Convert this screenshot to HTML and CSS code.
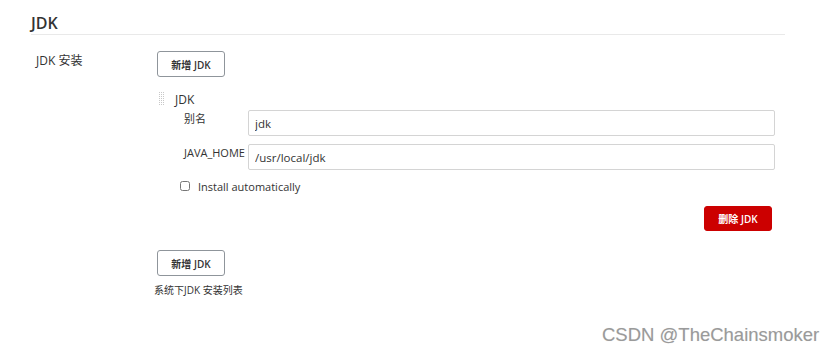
FILE: index.html
```html
<!DOCTYPE html>
<html lang="zh">
<head>
  <meta charset="UTF-8">
  <meta name="viewport" content="width=device-width, initial-scale=1.0">
  <title>JDK</title>
  <link rel="stylesheet" href="styles.css">
</head>
<body>
  <main class="page">
    <h2 class="section-title">JDK</h2>

    <div class="setting">
      <div class="setting-label">JDK 安装</div>
      <div class="setting-body">
        <button type="button" class="btn">新增 JDK</button>

        <div class="repeated">
          <div class="repeated-head">
            <svg class="handle" width="6" height="14" viewBox="0 0 6 14">
              <defs>
                <pattern id="dots" width="2" height="2" patternUnits="userSpaceOnUse">
                  <rect width="1" height="1" fill="#c8c8c8"/>
                </pattern>
              </defs>
              <rect width="6" height="14" fill="url(#dots)"/>
            </svg>
            <span class="repeated-title">JDK</span>
          </div>

          <div class="field">
            <label class="field-label" for="name">别名</label>
            <input class="field-input" id="name" type="text" value="jdk">
          </div>
          <div class="field">
            <label class="field-label" for="home">JAVA_HOME</label>
            <input class="field-input" id="home" type="text" value="/usr/local/jdk">
          </div>

          <label class="check">
            <input type="checkbox" class="check-box">
            <span>Install automatically</span>
          </label>

          <div class="repeated-actions">
            <button type="button" class="btn danger">删除 JDK</button>
          </div>
        </div>

        <button type="button" class="btn">新增 JDK</button>
        <div class="hint">系统下JDK 安装列表</div>
      </div>
    </div>
  </main>

  <div class="watermark">CSDN @TheChainsmoker</div>
</body>
</html>
```

FILE: styles.css
```css
:root {
  --text: #333;
  --line: #e9e9e9;
  --field-border: #d4d4d4;
  --danger: #cc0000;
}

* {
  box-sizing: border-box;
  font-family: 'Open Sans', 'Noto Sans CJK SC', sans-serif;
}

body {
  margin: 0;
  background-color: white;
  color: var(--text);
}

.page {
  width: 785px;
  padding-left: 31px;
}

.section-title {
  margin: 12px 0 0;
  font-size: 16px;
  line-height: 22px;
  font-weight: 600;
  border-bottom: 1px solid var(--line);
}

.setting {
  display: flex;
  margin-top: 16px;
}

.setting-label {
  width: 126px;
  padding-left: 5px;
  padding-top: 2px;
  font-size: 12px;
  line-height: 16px;
}

.setting-body {
  flex: 1;
  padding-right: 10px;
}

.btn {
  display: block;
  height: 26px;
  width: 68px;
  padding: 0;
  background-color: white;
  border: 1px solid #8f959b;
  border-radius: 3px;
  font-size: 10px;
  font-weight: 600;
  color: var(--text);
  cursor: pointer;
}

.btn.danger {
  height: 25px;
  background-color: var(--danger);
  border-color: var(--danger);
  color: white;
}

.repeated {
  margin-top: 14px;
}

.repeated-head {
  display: flex;
  align-items: center;
  gap: 10px;
  height: 16px;
  font-size: 12px;
}

.handle {
  margin-left: 2px;
}

.field {
  display: flex;
  margin-top: 8px;
  padding-left: 27px;
}

.repeated-head + .field {
  margin-top: 3px;
}

.field-label {
  width: 64px;
  padding-top: 1px;
  font-size: 11px;
  line-height: 16px;
}

.field-input {
  flex: 1;
  height: 26px;
  padding: 0 6px;
  border: 1px solid var(--field-border);
  border-radius: 2px;
  font-size: 11.5px;
  color: var(--text);
}

.check {
  display: flex;
  align-items: center;
  gap: 8px;
  margin-top: 8px;
  padding-left: 23px;
  height: 16px;
  font-size: 11px;
}

.check-box {
  width: 10px;
  height: 10px;
  margin: 0;
}

.repeated-actions {
  display: flex;
  justify-content: flex-end;
  margin-top: 12px;
  padding-right: 3px;
}

.repeated + .btn {
  margin-top: 19px;
}

.hint {
  margin-top: 6px;
  margin-left: -3px;
  font-size: 10px;
  line-height: 16px;
}

.watermark {
  position: absolute;
  left: 602px;
  top: 324px;
  font-family: 'Liberation Sans', sans-serif;
  font-size: 18.5px;
  color: #9a9a9a;
  text-shadow: 0 0 1px #e0e0e0;
}
```
